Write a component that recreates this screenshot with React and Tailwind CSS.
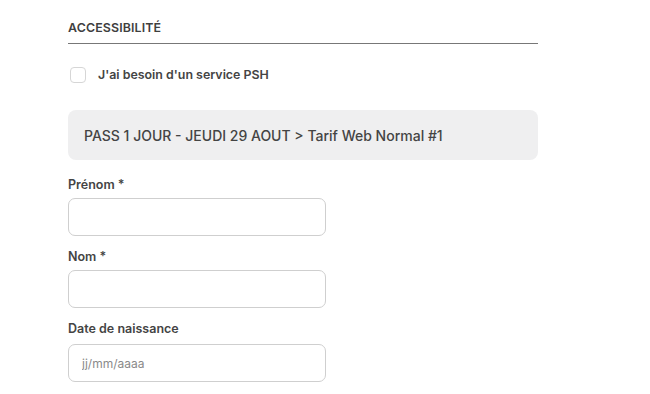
export default function App() {
  return (
    <div
      className="min-h-[394px] w-[650px] bg-white text-[#444]"
      style={{ fontFamily: "Inter, 'Liberation Sans', sans-serif" }}
    >
      <div className="ml-[68px] w-[470px] pt-[20px]">
        <h2 className="text-[12.4px] font-semibold leading-[16px] tracking-[0.01em] uppercase text-[#3f3f3f]">
          Accessibilité
        </h2>
        <div className="mt-[7px] h-px bg-[#777]" />

        <label className="mt-[23px] flex items-center gap-[12px] pl-[2px]">
          <span className="h-[16px] w-[16px] rounded-[4px] border border-[#d6d6d6] bg-white" />
          <span className="text-[12.4px] font-semibold leading-[16px] text-[#444]">
            J'ai besoin d'un service PSH
          </span>
        </label>

        <div className="mt-[27px] flex h-[50px] items-center rounded-[8px] bg-[#efeff0] px-[16px]">
          <span className="text-[14px] font-medium text-[#444]">
            PASS 1 JOUR - JEUDI 29 AOUT &gt; Tarif Web Normal #1
          </span>
        </div>

        <div className="mt-[16px] flex flex-col">
          <label className="text-[12.5px] font-semibold leading-[17px]">
            Prénom *
          </label>
          <input
            type="text"
            className="mt-[5px] h-[38px] w-[258px] rounded-[7px] border border-[#cfcfcf] bg-white px-[14px] text-[12px] outline-none"
          />
          <label className="mt-[12px] text-[12.5px] font-semibold leading-[17px]">
            Nom *
          </label>
          <input
            type="text"
            className="mt-[5px] h-[38px] w-[258px] rounded-[7px] border border-[#cfcfcf] bg-white px-[14px] text-[12px] outline-none"
          />
          <label className="mt-[12px] text-[12.5px] font-semibold leading-[17px]">
            Date de naissance
          </label>
          <input
            type="text"
            placeholder="jj/mm/aaaa"
            className="mt-[7px] h-[38px] w-[258px] rounded-[7px] border border-[#cfcfcf] bg-white px-[13px] text-[12px] outline-none placeholder:text-[#8a8a8a]"
          />
        </div>
      </div>
    </div>
  );
}
